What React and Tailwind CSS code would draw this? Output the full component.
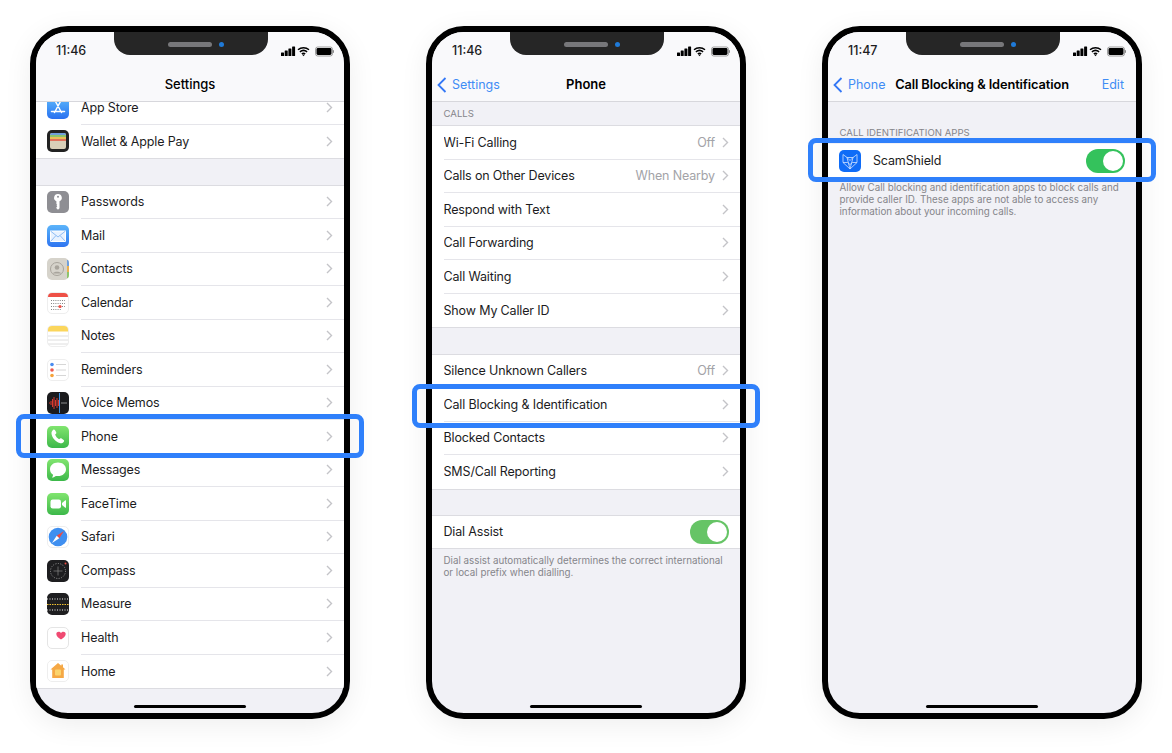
const Chevron = () => (
  <svg width="7" height="11" viewBox="0 0 7 11" className="shrink-0" fill="none">
    <path d="M1 1l4.5 4.5L1 10" stroke="#c4c4c8" strokeWidth="1.4" />
  </svg>
);

const BackChevron = () => (
  <svg width="10" height="16" viewBox="0 0 10 16" fill="none">
    <path d="M8.5 1L1.5 8l7 7" stroke="#3478f6" strokeWidth="1.8" />
  </svg>
);

/* Settings app icons */
const icons = {
  appstore: (
    <div className="w-[22px] h-[22px] rounded-[5px] bg-gradient-to-b from-[#5fb8fb] to-[#2a70f0]">
      <svg viewBox="0 0 22 22" fill="none" stroke="#fff" strokeWidth="1.500" strokeLinecap="round">
        <path d="M8.500 4.500l6 11M13.500 4.500l-6 11M4.500 14.500h13" />
      </svg>
    </div>
  ),
  wallet: (
    <div className="w-[22px] h-[22px] rounded-[5px] bg-[#222] p-[3px] overflow-hidden">
      <div className="h-[16px] rounded-[2px] bg-[#d8cfb8] overflow-hidden">
        <div className="h-[2px] bg-[#6f9fdc]" />
        <div className="h-[2px] bg-[#8cc46c]" />
        <div className="h-[2px] bg-[#eabf5a]" />
        <div className="h-[2px] bg-[#e0705c]" />
      </div>
    </div>
  ),
  passwords: (
    <div className="w-[22px] h-[22px] rounded-[5px] bg-[#8e8e93]">
      <svg viewBox="0 0 22 22" fill="#fff">
        <path d="M11 3a3.800 3.800 0 0 1 1.500 7.300v7l-1.500 1.500-1.600-1.500v-1l.9-.8-.9-.8.9-.8-.9-.8v-2.800A3.800 3.800 0 0 1 11 3z" />
        <circle cx="11" cy="5.800" r="1" fill="#8e8e93" />
      </svg>
    </div>
  ),
  mail: (
    <div className="w-[22px] h-[22px] rounded-[5px] bg-gradient-to-b from-[#5cb4fa] to-[#2f74f0]">
      <svg viewBox="0 0 22 22" fill="none" stroke="#fff" strokeWidth="1">
        <rect x="3.500" y="6" width="15" height="10.500" fill="#e8f2ff" />
        <path d="M3.500 6l7.500 6 7.500-6M3.500 16.500l5.500-6M18.500 16.500l-5.500-6" stroke="#8fbdf5" />
      </svg>
    </div>
  ),
  contacts: (
    <div className="w-[22px] h-[22px] rounded-[5px] bg-[#d6d3cb] relative overflow-hidden">
      <svg viewBox="0 0 22 22" fill="none">
        <circle cx="10" cy="11" r="6.500" stroke="#a8a49c" strokeWidth="1" />
        <circle cx="10" cy="9.500" r="2.300" fill="#a8a49c" />
        <path d="M5.800 15.500c1-2.300 7.400-2.300 8.400 0" fill="#a8a49c" />
        <rect x="20" y="2" width="2" height="6" fill="#6f9fdc" />
        <rect x="20" y="8" width="2" height="6" fill="#eab04f" />
        <rect x="20" y="14" width="2" height="6" fill="#8cc46c" />
      </svg>
    </div>
  ),
  calendar: (
    <div className="w-[22px] h-[22px] rounded-[5px] bg-white border border-[#eee] overflow-hidden">
      <svg viewBox="0 0 22 22" className="-m-px w-[22px] h-[22px]">
        <rect width="22" height="5" fill="#ee5046" />
        <g stroke="#777" strokeWidth="0.9" strokeDasharray="1 1.200">
          <path d="M4 8.500h14M4 11.500h14M4 14.500h14M4 17.500h10" />
        </g>
        <circle cx="13" cy="14.500" r="1.600" fill="#ee5046" />
      </svg>
    </div>
  ),
  notes: (
    <div className="w-[22px] h-[22px] rounded-[5px] bg-white border border-[#eee] overflow-hidden">
      <svg viewBox="0 0 22 22" className="-m-px w-[22px] h-[22px]">
        <rect width="22" height="6.500" fill="#fbd65c" />
        <path d="M0 11h22M0 15h22M0 19h22" stroke="#d5d5d5" strokeWidth="0.8" />
      </svg>
    </div>
  ),
  reminders: (
    <div className="w-[22px] h-[22px] rounded-[5px] bg-white border border-[#eee] overflow-hidden">
      <svg viewBox="0 0 22 22" className="-m-px w-[22px] h-[22px]">
        <circle cx="5" cy="5.500" r="1.800" fill="#4a8cf0" />
        <circle cx="5" cy="11" r="1.800" fill="#ee5a50" />
        <circle cx="5" cy="16.500" r="1.800" fill="#f5a33c" />
        <path d="M9 5.500h10M9 11h10M9 16.500h10" stroke="#ccc" strokeWidth="0.8" />
      </svg>
    </div>
  ),
  voice: (
    <div className="w-[22px] h-[22px] rounded-[5px] bg-[#1b1b1d]">
      <svg viewBox="0 0 22 22" fill="none">
        <path d="M2 11h1M4 9v4M5.500 7v8M7 5v12M8.500 8v6M10 6v10M11.500 8v6" stroke="#d9392f" strokeWidth="1" />
        <path d="M14 11h6" stroke="#aaa" strokeWidth="0.8" />
        <path d="M12.500 1v20" stroke="#3e93e6" strokeWidth="1" />
      </svg>
    </div>
  ),
  phone: (
    <div className="w-[22px] h-[22px] rounded-[5px] bg-gradient-to-b from-[#80e56f] to-[#3bb84a]">
      <svg viewBox="0 0 22 22" fill="#fff">
        <path d="M6.200 3.800c.6-.4 1.300-.3 1.700.3l1.300 2.100c.3.500.2 1.100-.2 1.500l-.9.800c.6 1.700 2.100 3.800 4 4.800l1-.8c.5-.3 1.100-.3 1.500 0l2 1.500c.6.400.7 1.200.2 1.700-1.100 1.300-2.500 1.900-4 1.400-4.500-1.500-7.900-5.700-8.300-9.700-.1-1.500.6-2.700 1.700-3.400z" />
      </svg>
    </div>
  ),
  messages: (
    <div className="w-[22px] h-[22px] rounded-[5px] bg-gradient-to-b from-[#80e56f] to-[#3bb84a]">
      <svg viewBox="0 0 22 22" fill="#fff">
        <path d="M11 3.500c4.700 0 8 2.900 8 6.800s-3.300 6.800-8 6.800c-.8 0-1.500-.1-2.200-.2-.9.900-2.300 1.500-3.800 1.500.6-.7 1-1.500 1.100-2.600C4.200 14.700 3 12.700 3 10.300c0-3.900 3.300-6.800 8-6.800z" />
      </svg>
    </div>
  ),
  facetime: (
    <div className="w-[22px] h-[22px] rounded-[5px] bg-gradient-to-b from-[#80e56f] to-[#3bb84a]">
      <svg viewBox="0 0 22 22" fill="#fff">
        <rect x="3.500" y="6.500" width="10.500" height="9" rx="2.200" />
        <path d="M15 10l3.300-2.700c.4-.3.7-.1.700.3v6.800c0 .4-.3.600-.7.300L15 12z" />
      </svg>
    </div>
  ),
  safari: (
    <div className="w-[22px] h-[22px] rounded-[5px] bg-white border border-[#eee]">
      <svg viewBox="0 0 22 22" className="-m-px w-[22px] h-[22px]">
        <circle cx="11" cy="11" r="9.300" fill="#3f8ff0" />
        <path d="M17 5l-7.300 4.700 2.600 2.600z" fill="#ee4a40" />
        <path d="M5 17l7.300-4.700-2.600-2.600z" fill="#fff" />
      </svg>
    </div>
  ),
  compass: (
    <div className="w-[22px] h-[22px] rounded-[5px] bg-[#1e1e20]">
      <svg viewBox="0 0 22 22" fill="none">
        <circle cx="11" cy="11" r="7.500" stroke="#999" strokeWidth="1" strokeDasharray="1 1.500" />
        <path d="M11 6.500v9M6.500 11h9" stroke="#888" strokeWidth="0.7" />
        <circle cx="18.500" cy="3.500" r="1" fill="#ee4a40" />
      </svg>
    </div>
  ),
  measure: (
    <div className="w-[22px] h-[22px] rounded-[5px] bg-[#1e1e20]">
      <svg viewBox="0 0 22 22" fill="none">
        <path d="M0 6h22M0 17h22" stroke="#888" strokeWidth="2" strokeDasharray="1 1.500" />
        <path d="M0 11.500h22" stroke="#f2c230" strokeWidth="1" strokeDasharray="1.500 1" />
      </svg>
    </div>
  ),
  health: (
    <div className="w-[22px] h-[22px] rounded-[5px] bg-white border border-[#e5e5e5]">
      <svg viewBox="0 0 22 22" className="-m-px w-[22px] h-[22px]">
        <path d="M14 12.500c-2.600-1.800-4.700-3.400-4.700-5.600 0-2.300 3.300-3 4.700-.9 1.400-2.100 4.700-1.400 4.700.9 0 2.200-2.100 3.800-4.700 5.600z" fill="#f04a72" />
      </svg>
    </div>
  ),
  home: (
    <div className="w-[22px] h-[22px] rounded-[5px] bg-white border border-[#eee]">
      <svg viewBox="0 0 22 22" className="-m-px w-[22px] h-[22px]">
        <path d="M11 3l3.300 2.800V4.500h1.700v2.800l2.500 2.200h-1.700V18h-11.600V9.500H3.500z" fill="#f5a845" />
        <rect x="8" y="9.500" width="6" height="6" rx="1" fill="#fbd46e" />
      </svg>
    </div>
  ),
  scam: (
    <div className="w-[22px] h-[22px] rounded-[5px] bg-[#0f6cf7]">
      <svg viewBox="0 0 22 22" fill="none" stroke="#cfe2ff" strokeWidth="0.8">
        <path d="M4 4.500l4 3h6l4-3v8L11 19 4 12.500zM8 7.500L11 19l3-11.500M4 12.500h4.500l2.500 2 2.500-2H18M8 7.500l3 3 3-3" />
      </svg>
    </div>
  ),
};

function Row({ icon, label, value, last }) {
  return (
    <div className={`h-[33.5px] flex items-center bg-white ${icon ? "pl-[11px]" : "pl-[11.500px]"}`}>
      {icon && <div className="w-[22px] shrink-0 mr-3">{icons[icon]}</div>}
      <div className={`flex-1 h-full flex items-center pr-[11px] ${last ? "" : "border-b border-[#e5e5ea]"}`}>
        <span className="flex-1 truncate pt-[2px]">{label}</span>
        {value && <span className="text-[#a3a3a8] mr-[7px] pt-[2px]">{value}</span>}
        <Chevron />
      </div>
    </div>
  );
}

function Toggle({ color }) {
  return (
    <div className={`w-[39px] h-[24px] rounded-full p-[2px] flex justify-end ${color}`}>
      <div className="w-[20px] h-[20px] rounded-full bg-white" />
    </div>
  );
}

function Group({ children }) {
  return <div className="bg-white border-y border-[#dcdce1]">{children}</div>;
}

function Footnote({ children, top }) {
  return <div className={`pl-[11.500px] pr-[10px] text-[9.800px] tracking-normal leading-[12px] text-[#85858a] ${top}`}>{children}</div>;
}

function Phone({ time, children, nav, highlightTop }) {
  return (
    <div className="relative w-[320px] h-[693px] shrink-0 rounded-[38px] border-[6px] border-black bg-[#f1f1f6] shadow-[0_6px_28px_rgba(0,0,0,0.07)]">
      <div className="relative w-full h-full rounded-[32px] overflow-hidden flex flex-col">
        <div className="relative z-10 h-[70px] shrink-0 bg-[#f9f9fb] border-b border-[#d7d7dc]">
          {/* notch */}
          <div className="absolute top-0 left-[78px] w-[154px] h-[23px] bg-[#262626] rounded-b-[16px]">
            <div className="absolute left-[54px] top-[10px] w-[44px] h-[5px] rounded-full bg-[#77777a]" />
            <div className="absolute left-[105px] top-[10px] w-[5px] h-[5px] rounded-full bg-[#1f7ad8]" />
          </div>
          {/* status bar */}
          <div className="flex items-center justify-between pl-[20px] pr-[10px] pt-[12px]">
            <span className="text-[12.500px] leading-[14px] font-medium text-[#1c1c1e]">{time}</span>
            <svg width="53" height="11" viewBox="0 0 53 11">
              <rect x="0" y="6.500" width="3" height="3.500" rx="0.500" />
              <rect x="3.700" y="4.500" width="3" height="5.500" rx="0.500" />
              <rect x="7.400" y="2.500" width="3" height="7.500" rx="0.500" />
              <rect x="11.100" y="0.500" width="3" height="9.500" rx="0.500" />
              <path d="M17 3.700a8.500 8.500 0 0 1 11 0M18.900 5.900a5.600 5.600 0 0 1 7.200 0M20.800 7.900a2.800 2.800 0 0 1 3.400 0" fill="none" stroke="#000" strokeWidth="1.500" />
              <path d="M21 8.500l1.500 1.800 1.500-1.800z" />
              <rect x="34.500" y="1" width="17" height="9" rx="2.200" fill="none" stroke="#888" strokeWidth="0.800" />
              <rect x="35.500" y="2" width="15" height="7" rx="1.400" />
              <rect x="52" y="4.200" width="1" height="2.600" fill="#888" />
            </svg>
          </div>
          {/* nav bar */}
          <div className="absolute left-0 right-0 top-[43px] h-[19px] flex items-center justify-center text-[13px]">
            {nav}
          </div>
        </div>
        <div className="flex-1 text-[12.500px] tracking-[-0.15px] text-[#1c1c1e]">{children}</div>
        {/* home indicator */}
        <div className="absolute bottom-[5px] left-[98px] w-[112px] h-[3px] rounded-full bg-black" />
      </div>
      {/* highlight frame */}
      <div style={{ top: highlightTop }} className="absolute -left-[20px] w-[348px] h-[44px] rounded-[8px] border-[5px] border-[#2f80fb]" />
    </div>
  );
}

function BackLink({ label }) {
  return (
    <div className="absolute left-[5px] flex items-center gap-[5px] text-[12.500px] text-[#3f8cf5]">
      <BackChevron />
      <span className="pt-[1px]">{label}</span>
    </div>
  );
}

const settingsTop = [
  ["appstore", "App Store"],
  ["wallet", "Wallet & Apple Pay"],
];
const settingsMain = [
  ["passwords", "Passwords"],
  ["mail", "Mail"],
  ["contacts", "Contacts"],
  ["calendar", "Calendar"],
  ["notes", "Notes"],
  ["reminders", "Reminders"],
  ["voice", "Voice Memos"],
  ["phone", "Phone"],
  ["messages", "Messages"],
  ["facetime", "FaceTime"],
  ["safari", "Safari"],
  ["compass", "Compass"],
  ["measure", "Measure"],
  ["health", "Health"],
  ["home", "Home"],
];

export default function App() {
  return (
    <div className="w-[1172px] h-[753px] bg-white overflow-hidden flex gap-[76px] pl-[30px] pt-[26px] [font-family:Inter,'Liberation_Sans',sans-serif]">
      {/* Settings */}
      <Phone time="11:46" highlightTop={382} nav={<span className="font-medium">Settings</span>}>
        <div className="-mt-[12px]">
          <Group>
            {settingsTop.map(([icon, label], i) => (
              <Row key={label} icon={icon} label={label} last={i === settingsTop.length - 1} />
            ))}
          </Group>
          <div className="h-[25.500px]" />
          <Group>
            {settingsMain.map(([icon, label], i) => (
              <Row key={label} icon={icon} label={label} last={i === settingsMain.length - 1} />
            ))}
          </Group>
        </div>
      </Phone>

      {/* Phone */}
      <Phone
        time="11:46"
        highlightTop={352}
        nav={
          <>
            <BackLink label="Settings" />
            <span className="font-semibold">Phone</span>
          </>
        }
      >
        <div className="h-[23px] pl-[11.500px] pt-[2px] flex items-center text-[9.600px] tracking-normal text-[#85858a]">CALLS</div>
        <Group>
          <Row label="Wi-Fi Calling" value="Off" />
          <Row label="Calls on Other Devices" value="When Nearby" />
          <Row label="Respond with Text" />
          <Row label="Call Forwarding" />
          <Row label="Call Waiting" />
          <Row label="Show My Caller ID" last />
        </Group>
        <div className="h-[25.500px]" />
        <Group>
          <Row label="Silence Unknown Callers" value="Off" />
          <Row label="Call Blocking & Identification" />
          <Row label="Blocked Contacts" />
          <Row label="SMS/Call Reporting" last />
        </Group>
        <div className="h-[25px]" />
        <Group>
          <div className="h-[32px] bg-white flex items-center justify-between pl-[11.500px] pr-[11px]">
            <span className="pt-[2px]">Dial Assist</span>
            <Toggle color="bg-[#66c466]" />
          </div>
        </Group>
        <Footnote top="pt-[6px]">
          Dial assist automatically determines the correct international or local prefix when dialling.
        </Footnote>
      </Phone>

      {/* Call Blocking */}
      <Phone
        time="11:47"
        highlightTop={106}
        nav={
          <>
            <BackLink label="Phone" />
            <span className="font-semibold text-[12.800px] tracking-[-0.1px]">Call Blocking &amp; Identification</span>
            <span className="absolute right-[12px] pt-[1px] text-[12.500px] text-[#3f8cf5]">Edit</span>
          </>
        }
      >
        <div className="h-[42px] pl-[11.500px] pt-[24px] text-[9.600px] tracking-normal leading-[14px] text-[#85858a]">CALL IDENTIFICATION APPS</div>
        <div className="h-[34px] bg-white flex items-center pl-[11px] pr-[11px]">
          <div className="w-[22px] shrink-0 mr-[12px]">{icons.scam}</div>
          <span className="flex-1">ScamShield</span>
          <Toggle color="bg-[#34c25c]" />
        </div>
        <Footnote top="pt-[4px]">
          Allow Call blocking and identification apps to block calls and provide caller ID. These apps are not able to access any information about your incoming calls.
        </Footnote>
      </Phone>
    </div>
  );
}
